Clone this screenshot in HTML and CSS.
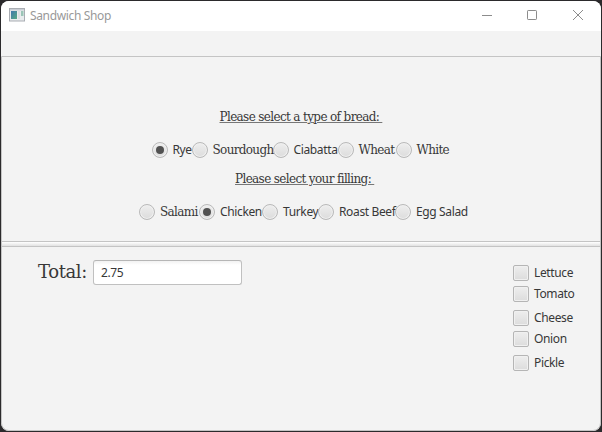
FILE: index.html
```html
<!DOCTYPE html>
<html lang="en">
<head>
<meta charset="utf-8">
<title>Sandwich Shop</title>
<link rel="stylesheet" href="styles.css">
</head>
<body>
<main class="window">
  <header class="titlebar">
    <svg class="app-icon" width="16" height="14" viewBox="0 0 16 14">
      <defs><linearGradient id="pane" x2="1" y2="1"><stop stop-color="#3f78ad"/><stop offset="1" stop-color="#56aa83"/></linearGradient></defs>
      <rect x=".5" y=".5" width="15" height="12.5" fill="#e9ecee" stroke="#a9adb3"/>
      <rect x="1" y="1" width="14" height="1.5" fill="#c9cdd4"/>
      <rect x="2" y="3" width="6" height="8" fill="url(#pane)"/>
      <rect x="9" y="3" width="2" height="8" fill="#dcdfe2"/>
      <rect x="12" y="3" width="2.5" height="5" fill="#9bc5b7"/>
    </svg>
    <span class="title">Sandwich Shop</span>
    <svg class="controls" width="104" height="12" viewBox="0 0 104 12" fill="none" stroke="#8c8c8c">
      <path d="M1 6.5h10"/>
      <rect x="46.5" y="1.5" width="9" height="9" rx=".7"/>
      <path d="M92 1l10 10M102 1l-10 10"/>
    </svg>
  </header>
  <div class="toolbar"></div>
  <section class="split">
    <div class="choices">
      <h2 class="heading bread-heading">Please select a type of bread: </h2>
      <div class="radios">
        <label class="option"><i class="radio on"></i><span class="w-rye">Rye</span></label>
        <label class="option"><i class="radio"></i><span class="serif w-sourdough">Sourdough</span></label>
        <label class="option"><i class="radio"></i><span class="w-ciabatta">Ciabatta</span></label>
        <label class="option"><i class="radio"></i><span class="serif w-wheat">Wheat</span></label>
        <label class="option"><i class="radio"></i><span class="serif w-white">White</span></label>
      </div>
      <h2 class="heading filling-heading">Please select your filling: </h2>
      <div class="radios fillings">
        <label class="option"><i class="radio"></i><span class="serif w-salami">Salami</span></label>
        <label class="option"><i class="radio on"></i><span class="w-chicken">Chicken</span></label>
        <label class="option"><i class="radio"></i><span class="w-turkey">Turkey</span></label>
        <label class="option"><i class="radio"></i><span class="w-roast">Roast Beef</span></label>
        <label class="option"><i class="radio"></i><span class="w-egg">Egg Salad</span></label>
      </div>
    </div>
    <div class="divider"></div>
    <div class="summary">
      <span class="total">Total:</span>
      <div class="amount">2.75</div>
      <div class="extras">
        <label class="extra"><i class="check"></i><span>Lettuce</span></label>
        <label class="extra"><i class="check"></i><span>Tomato</span></label>
        <label class="extra gap"><i class="check"></i><span>Cheese</span></label>
        <label class="extra"><i class="check"></i><span>Onion</span></label>
        <label class="extra gap"><i class="check"></i><span>Pickle</span></label>
      </div>
    </div>
  </section>
</main>
</body>
</html>
```
FILE: styles.css
```css
* { box-sizing: border-box; }
body {
  margin: 0;
  padding: 1px;
  height: 432px;
  background: #2b2a2c;
  overflow: hidden;
  font: 12px/16px "Noto Sans", sans-serif;
  letter-spacing: -0.36px;
  color: #383838;
}
.window {
  height: 430px;
  border-radius: 8px;
  overflow: hidden;
  background: #f3f3f3;
  display: flex;
  flex-direction: column;
}
.titlebar {
  height: 30px;
  flex: none;
  display: flex;
  align-items: center;
  padding: 0 16px 2px 8px;
  background: #fff;
}
.title { margin-left: 5px; padding-top: 1px; color: #999; letter-spacing: -0.35px; }
.controls { margin-left: auto; }
.toolbar { height: 25px; flex: none; }
.split {
  flex: 1;
  border: 1px solid #c4c4c4;
  border-radius: 0 0 8px 8px;
  display: flex;
  flex-direction: column;
}
.choices { height: 184px; padding-top: 52px; flex: none; }
.heading {
  margin: 0 auto;
  height: 16px;
  font: 12px/16px "DejaVu Serif", serif;
  white-space: pre;
  text-decoration: underline;
  text-decoration-color: #777;
  text-decoration-thickness: 1px;
  text-underline-offset: 1px;
}
.bread-heading { width: 163px; letter-spacing: -0.64px; }
.filling-heading { width: 142px; letter-spacing: -0.64px; position: relative; left: 5px; }
.radios { display: flex; justify-content: center; height: 16px; margin: 17px 0 13px; }
.fillings { padding-left: 5px; }
.option { display: flex; gap: 5px; white-space: nowrap; }
.serif { font: 12px/16px "DejaVu Serif", serif; letter-spacing: -0.66px; }
.radio {
  width: 16px;
  height: 16px;
  flex: none;
  border: 1px solid #b9b9b9;
  border-radius: 50%;
  background: linear-gradient(#eee, #dcdcdc);
  box-shadow: inset 0 0 0 1px #f0f0f0;
  display: grid;
  place-items: center;
}
.radio.on::after { content: ""; width: 8px; height: 8px; border-radius: 50%; background: #515151; }
.w-rye { width: 19px; }
.w-sourdough { width: 60px; }
.w-ciabatta { width: 44px; }
.w-wheat { width: 37px; }
.w-white { width: 34px; }
.w-salami { width: 39px; }
.w-chicken { width: 42px; }
.w-turkey { width: 35px; }
.w-roast { width: 56px; }
.w-egg { width: 52px; }
.divider {
  height: 6px;
  flex: none;
  border: solid #c4c4c4;
  border-width: 1px 0;
  background: linear-gradient(#fff, #ededed 60%, #e2e2e2);
}
.summary { flex: 1; display: flex; align-items: flex-start; padding: 13px 23px 0 36px; }
.total { width: 55px; font: 18px/24px "DejaVu Serif", serif; letter-spacing: -0.4px; }
.amount {
  width: 149px;
  height: 25px;
  padding: 4px 7px;
  border: 1px solid #c0c0c0;
  border-top-color: #b6b6b6;
  border-radius: 3px;
  background: linear-gradient(#f2f2f2, #fff 4px);
}
.extras { margin: 5px 0 0 auto; width: 64px; display: flex; flex-direction: column; gap: 5px; }
.extra { display: flex; gap: 5px; height: 16px; white-space: nowrap; }
.extra.gap { margin-top: 3px; }
.check {
  width: 16px;
  height: 16px;
  flex: none;
  border: 1px solid #b5b5b5;
  border-radius: 2px;
  background: linear-gradient(#eee, #dcdcdc);
  box-shadow: inset 0 0 0 1px #f0f0f0;
}
```
